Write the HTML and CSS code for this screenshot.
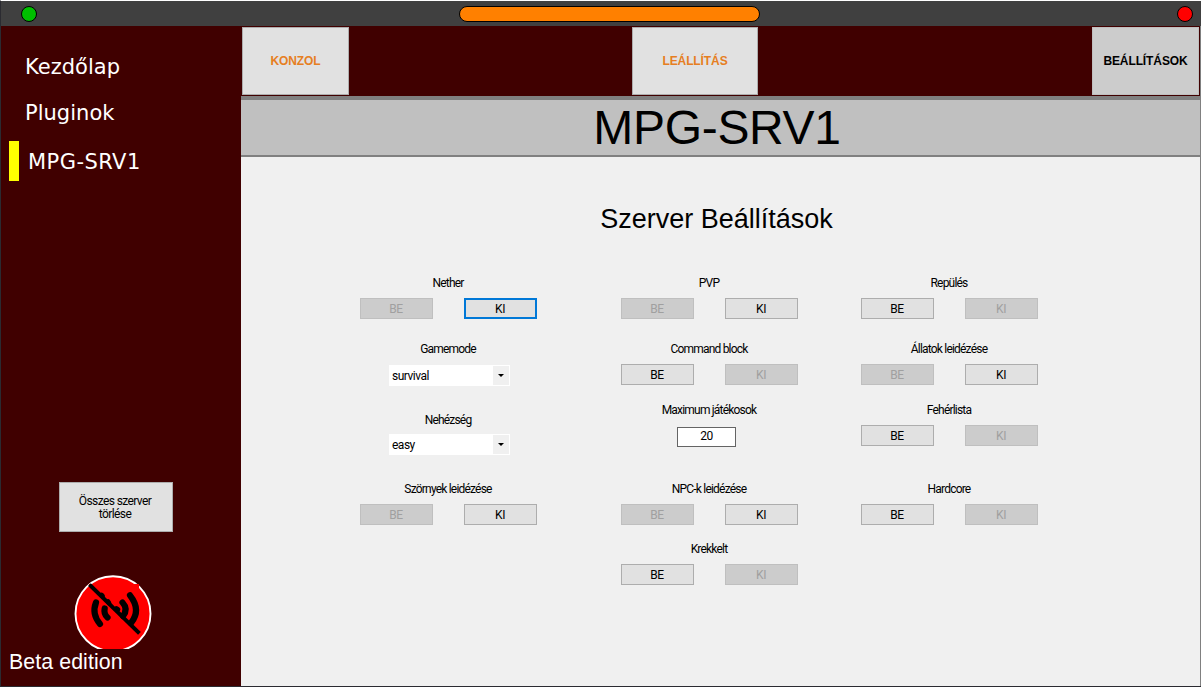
FILE: index.html
```html
<!DOCTYPE html>
<html lang="hu">
<head>
<meta charset="utf-8">
<title>MPG-SRV1</title>
<link rel="stylesheet" href="styles.css">
</head>
<body>
<div class="window">
  <header class="titlebar">
    <span class="dot dot-green"></span>
    <span class="pill"></span>
    <span class="dot dot-red"></span>
  </header>
  <div class="body">
    <aside class="sidebar">
      <nav class="menu">
        <a class="menu-item">Kezdőlap</a>
        <a class="menu-item">Pluginok</a>
        <a class="menu-item active">MPG-SRV1</a>
      </nav>
      <button class="delete-all">Összes szerver<br>törlése</button>
      <svg class="signal" width="78" height="74" viewBox="74 575 78 74">
        <circle cx="113" cy="613.700" r="37.500" fill="#f00" stroke="#fff" stroke-width="1.900"/>
        <path d="M89 584H139V634H89Z" fill="#f00"/>
        <g fill="none" stroke="#000" stroke-width="6.2" stroke-linecap="round">
          <path d="M96 602.5Q91.500 614 100 624"/>
          <path d="M104.700 608.500Q103.500 614 107.500 617.500"/>
          <path d="M122.500 602.500Q128.500 609 123 616"/>
          <path d="M130 595.300Q141.500 610 131 623"/>
          <path d="M108 601.500L109 603M116.500 608.500L118 609.500M101.500 595L102.500 596" stroke-width="4.800"/>
          <path d="M90.800 586L138 632" stroke-width="4" stroke-linecap="square"/>
        </g>
      </svg>
      <div class="edition">Beta edition</div>
    </aside>
    <main class="main">
      <div class="tabs">
        <button class="tab">KONZOL</button>
        <button class="tab tab-stop">LEÁLLÍTÁS</button>
        <button class="tab current">BEÁLLÍTÁSOK</button>
      </div>
      <h1 class="server-name">MPG-SRV1</h1>
      <section class="settings">
        <h2 class="heading">Szerver Beállítások</h2>
        <div class="grid">
          <div class="field"><label>Nether</label><div class="pair"><button disabled>BE</button><button class="focused">KI</button></div></div>
          <div class="field"><label>PVP</label><div class="pair"><button disabled>BE</button><button>KI</button></div></div>
          <div class="field"><label>Repülés</label><div class="pair"><button>BE</button><button disabled>KI</button></div></div>

          <div class="field"><label>Gamemode</label><div class="combo low"><span>survival</span><i class="arrow"></i></div></div>
          <div class="field"><label>Command block</label><div class="pair"><button>BE</button><button disabled>KI</button></div></div>
          <div class="field"><label>Állatok leidézése</label><div class="pair"><button disabled>BE</button><button>KI</button></div></div>

          <div class="field lowered"><label>Nehézség</label><div class="combo"><span>easy</span><i class="arrow"></i></div></div>
          <div class="field"><label>Maximum játékosok</label><div class="count">20</div></div>
          <div class="field"><label>Fehérlista</label><div class="pair"><button>BE</button><button disabled>KI</button></div></div>

          <div class="field"><label>Szörnyek leidézése</label><div class="pair"><button disabled>BE</button><button>KI</button></div></div>
          <div class="field"><label>NPC-k leidézése</label><div class="pair"><button disabled>BE</button><button>KI</button></div></div>
          <div class="field"><label>Hardcore</label><div class="pair"><button>BE</button><button disabled>KI</button></div></div>

          <div class="field middle"><label>Krekkelt</label><div class="pair"><button>BE</button><button disabled>KI</button></div></div>
        </div>
      </section>
    </main>
  </div>
</div>
</body>
</html>
```
FILE: styles.css
```css
* { box-sizing: border-box; }
body { margin: 0; font-family: "Liberation Sans", Arial, sans-serif; color: #000; }
button { margin: 0; padding: 0; font: inherit; color: #000; border-radius: 0; }

.window {
  width: 1201px;
  height: 687px;
  display: flex;
  flex-direction: column;
  border: solid #2b2b31;
  border-width: 1px 0 1px 1px;
  border-top-color: #fff;
}
.titlebar {
  height: 25px;
  flex: none;
  padding: 0 8px 0 20px;
  display: flex;
  align-items: center;
  justify-content: space-between;
  background: #404040;
}
.dot { width: 16px; height: 16px; border: 1px solid #000; border-radius: 50%; }
.dot-green { background: #00c000; }
.dot-red { background: #f00; }
.pill { width: 301px; height: 16px; margin-left: 5px; border: 1px solid #000; border-radius: 8px; background: #ff8000; }

.body { flex: 1; display: flex; min-height: 0; }
.sidebar { width: 240px; flex: none; display: flex; flex-direction: column; background: #400000; color: #fff; }
.menu { padding-top: 20px; font: 21px/42px "DejaVu Sans", Verdana, sans-serif; }
.menu-item { display: block; height: 40px; margin-bottom: 6px; padding-left: 24px; letter-spacing: 0.02px; }
.menu-item.active { margin: 9px 0 0 8px; padding-left: 9px; border-left: 10px solid #ff0; letter-spacing: 0.45px; }
.delete-all {
  width: 114px;
  height: 50px;
  margin: 301px 0 0 58px;
  padding: 2px 2px 0 0;
  border: 1px solid #adadad;
  background: #e1e1e1;
  font: 12px/13px Roboto, sans-serif;
  letter-spacing: -0.6px;
}
.signal { display: block; margin: 43px 0 1px 73px; }
.edition { margin-left: 8px; font-size: 21.33px; line-height: 24px; letter-spacing: 0.08px; }

.main { flex: 1; display: flex; flex-direction: column; border-right: 1px solid #808080; background: #f0f0f0; }
.tabs { height: 70px; flex: none; padding: 1px; display: flex; justify-content: space-between; background: #400000; }
.tab { width: 107px; height: 68px; border: 1px solid #adadad; background: #e1e1e1; color: #e67e22; font: bold 12px/14px "Liberation Sans", Arial, sans-serif; letter-spacing: -0.1px; }
.tab-stop { width: 126px; margin-right: 51px; }
.tab.current { border-color: #bfbfbf; background: #ccc; color: #000; }
.server-name {
  height: 61px;
  flex: none;
  margin: 0;
  padding-right: 7px;
  border: solid #808080;
  border-width: 4px 0 2px;
  background: #c0c0c0;
  font-size: 48px;
  font-weight: normal;
  line-height: 56px;
  letter-spacing: -0.3px;
  text-align: center;
}
.settings { flex: 1; }
.heading { margin: 46px 0 0; padding-right: 8px; font-size: 27px; font-weight: normal; line-height: 32px; text-align: center; }
.grid {
  margin: 41px 0 0 119px;
  display: grid;
  grid-template-columns: 261px 240px 177px;
  grid-template-rows: 66px 61px 79px 60px 43px;
  font: 12px/14px Roboto, sans-serif;
  letter-spacing: -0.5px;
}
.field { width: 177px; display: flex; flex-direction: column; align-items: center; }
.field label { height: 14px; margin-bottom: 8px; padding-right: 1px; letter-spacing: -0.8px; white-space: nowrap; }
.field.middle { grid-column: 2; }
.field.lowered { padding-top: 10px; }
.field.lowered label { margin-bottom: 7px; }
.pair { width: 177px; display: flex; justify-content: space-between; }
.pair button { width: 73px; height: 21px; padding: 1px 1px 0 0; border: 1px solid #adadad; background: #e1e1e1; line-height: 18px; letter-spacing: -0.4px; }
.pair button:disabled { border-color: #bfbfbf; background: #ccc; color: #a0a0a0; }
.pair button.focused { border: 2px solid #0078d7; line-height: 16px; }
.combo { width: 121px; height: 21px; margin-left: 2px; padding: 1px 1px 1px 3px; display: flex; justify-content: space-between; background: #fff; line-height: 20px; }
.combo.low { margin-top: 1px; }
.arrow { width: 16px; height: 19px; display: flex; align-items: center; justify-content: center; background: #f0f0f0; }
.arrow::before { content: ""; border: solid transparent; border-width: 3px 3px 0; border-top-color: #000; }
.count { width: 59px; height: 20px; margin: 2px 6px 0 0; border: 1px solid #646464; background: #fff; line-height: 17px; text-align: center; }
```
